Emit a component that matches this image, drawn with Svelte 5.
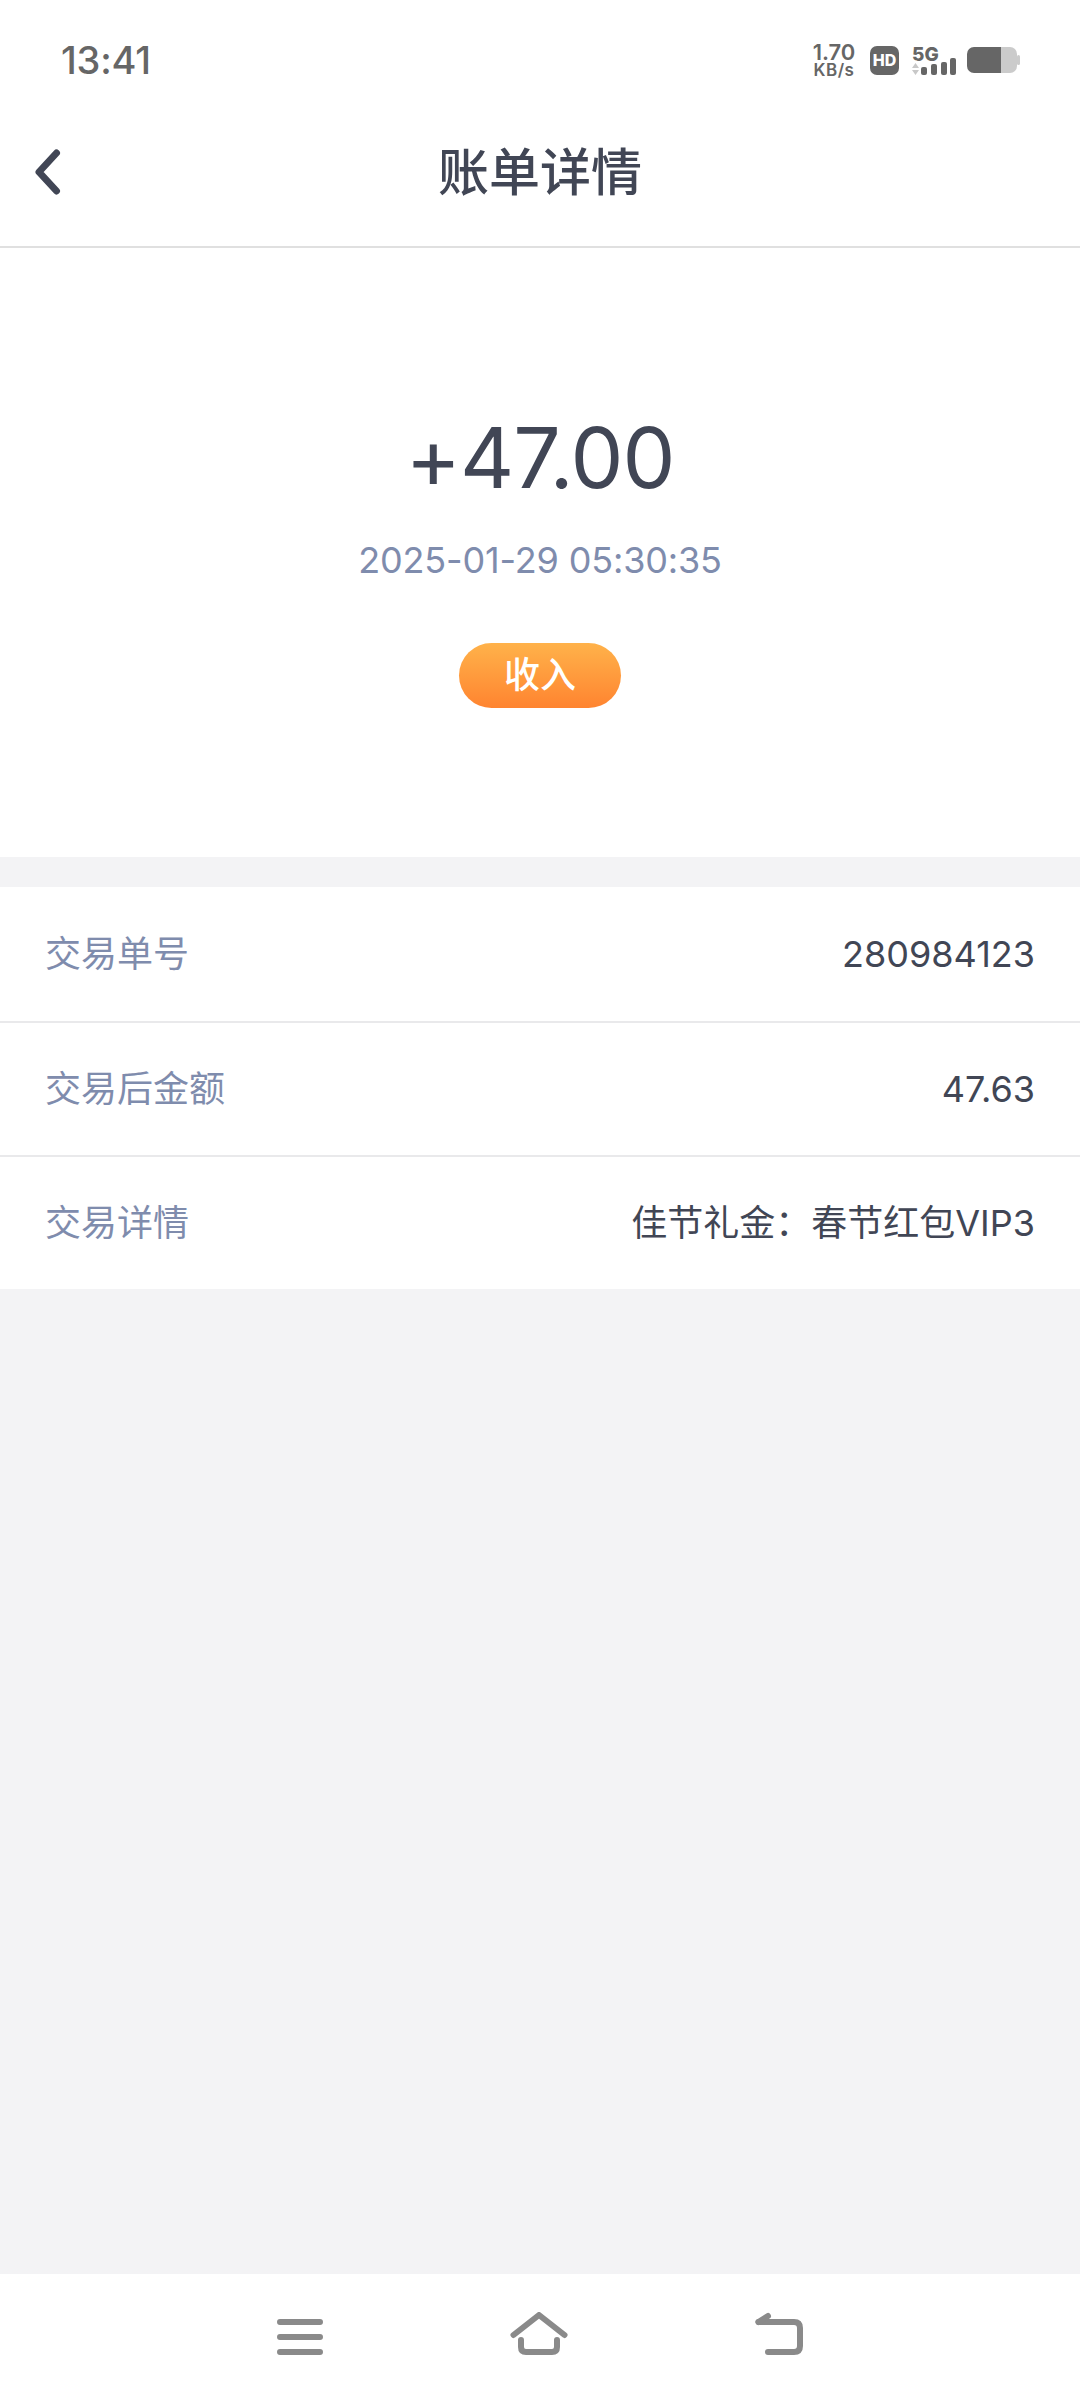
<script lang="ts">
  const rows = [
    { label: '交易单号', value: '280984123' },
    { label: '交易后金额', value: '47.63' },
    { label: '交易详情', value: '佳节礼金：春节红包VIP3' }
  ];
</script>

<div class="page">
  <div class="status-bar">
    <span class="time">13:41</span>
    <div class="status-icons">
      <div class="speed">
        <span>1.70</span>
        <span class="unit">KB/s</span>
      </div>
      <span class="hd">HD</span>
      <div class="signal">
        <span class="five-g">5G</span>
        <svg width="44" height="17" viewBox="0 0 44 17">
          <path d="M0 10 L3.5 5 L7 10 Z M0 12 L7 12 L3.5 17 Z" fill="#c8c8c8" />
          <rect x="9" y="9" width="6" height="8" rx="2" fill="#666" />
          <rect x="19" y="6" width="6" height="11" rx="2" fill="#666" />
          <rect x="29" y="4" width="6" height="13" rx="2" fill="#666" />
          <rect x="38" y="0" width="6" height="17" rx="2" fill="#666" />
        </svg>
      </div>
      <svg class="battery" width="53" height="26" viewBox="0 0 53 26">
        <path d="M34 0 H43 A7 7 0 0 1 50 7 V19 A7 7 0 0 1 43 26 H34 Z" fill="#cbcbcb" />
        <path d="M7 0 H34 V26 H7 A7 7 0 0 1 0 19 V7 A7 7 0 0 1 7 0 Z" fill="#666" />
        <rect x="50" y="8" width="3" height="10" rx="1.5" fill="#cbcbcb" />
      </svg>
    </div>
  </div>

  <header class="nav">
    <button class="back" aria-label="返回">
      <svg width="26" height="46" viewBox="0 0 26 46">
        <path d="M21.5 4 L4 23 L21.5 42" fill="none" stroke="#414655" stroke-width="7" stroke-linecap="round" stroke-linejoin="round" />
      </svg>
    </button>
    <h1>账单详情</h1>
  </header>

  <section class="hero">
    <div class="amount">+47.00</div>
    <div class="date">2025-01-29 05:30:35</div>
    <div class="tag">收入</div>
  </section>

  <section class="list">
    {#each rows as row}
      <div class="row">
        <span class="label">{row.label}</span>
        <span class="value">{row.value}</span>
      </div>
    {/each}
  </section>

  <div class="spacer"></div>

  <nav class="sys-nav">
    <svg width="46" height="43" viewBox="0 0 46 43">
      <path d="M3 10 H43 M3 25 H43 M3 40 H43" stroke="#8a8a8a" stroke-width="6" stroke-linecap="round" />
    </svg>
    <svg width="58" height="43" viewBox="0 0 58 43">
      <path d="M3.5 23 L29 3 L54.5 23" fill="none" stroke="#8a8a8a" stroke-width="6" stroke-linecap="round" stroke-linejoin="round" />
      <path d="M11 28 V35 Q11 40 16 40 H42 Q47 40 47 35 V28" fill="none" stroke="#8a8a8a" stroke-width="6" stroke-linecap="round" />
    </svg>
    <svg width="48" height="43" viewBox="0 0 48 43">
      <path d="M3.5 10 H39 Q45 10 45 16 V34 Q45 40 39 40 H13" fill="none" stroke="#8a8a8a" stroke-width="6" stroke-linecap="round" />
      <path d="M3.5 10 L13 4" fill="none" stroke="#8a8a8a" stroke-width="6" stroke-linecap="round" />
    </svg>
  </nav>
</div>

<style>
  :global(body) {
    margin: 0;
    background: #f3f3f5;
  }

  .page {
    width: 1080px;
    height: 2400px;
    display: flex;
    flex-direction: column;
    background: #f3f3f5;
    font-family: Inter, "Noto Sans CJK SC", sans-serif;
  }

  .status-bar {
    height: 98px;
    flex-shrink: 0;
    display: flex;
    align-items: center;
    justify-content: space-between;
    box-sizing: border-box;
    padding: 22px 60px 0 61px;
    background: #fff;
  }

  .time {
    font-size: 38px;
    font-weight: 500;
    letter-spacing: -0.2px;
    color: #666;
  }

  .status-icons {
    display: flex;
    align-items: center;
  }

  .speed {
    display: flex;
    flex-direction: column;
    align-items: center;
    width: 44px;
    margin-right: 14px;
    font-size: 22px;
    font-weight: 600;
    line-height: 20px;
    color: #666;
  }

  .speed .unit {
    font-size: 17px;
    letter-spacing: 0.5px;
    line-height: 17px;
  }

  .hd {
    width: 29px;
    height: 29px;
    border-radius: 7px;
    background: #666;
    color: #fff;
    font-size: 16px;
    font-weight: 800;
    line-height: 29px;
    text-align: center;
    margin-right: 13px;
  }

  .signal {
    position: relative;
    width: 44px;
    height: 29px;
    display: flex;
    align-items: flex-end;
    margin-right: 11px;
  }

  .five-g {
    position: absolute;
    top: -3px;
    left: 0;
    font-size: 19px;
    font-weight: 800;
    color: #666;
  }

  .nav {
    height: 150px;
    flex-shrink: 0;
    display: flex;
    align-items: center;
    justify-content: center;
    position: relative;
    box-sizing: border-box;
    padding-bottom: 6px;
    background: #fff;
    border-bottom: 2px solid #e0e0e0;
  }

  .back {
    position: absolute;
    left: 35px;
    top: 51px;
    padding: 0;
    border: 0;
    background: none;
    display: flex;
  }

  h1 {
    margin: 0;
    font-size: 51px;
    font-weight: 500;
    color: #414655;
  }

  .hero {
    height: 609px;
    flex-shrink: 0;
    display: flex;
    flex-direction: column;
    align-items: center;
    box-sizing: border-box;
    padding-top: 160px;
    background: #fff;
  }

  .amount {
    font-size: 84px;
    line-height: 100px;
    letter-spacing: -1px;
    color: #414655;
  }

  .date {
    margin-top: 29px;
    font-size: 36px;
    line-height: 46px;
    letter-spacing: -0.15px;
    color: #7f8cad;
  }

  .tag {
    margin-top: 60px;
    width: 162px;
    height: 65px;
    border-radius: 33px;
    background: linear-gradient(180deg, #ffb24a, #ff8430);
    color: #fff;
    font-size: 36px;
    font-weight: 500;
    line-height: 65px;
    text-align: center;
  }

  .list {
    margin-top: 30px;
    background: #fff;
  }

  .row {
    height: 134px;
    display: flex;
    align-items: center;
    justify-content: space-between;
    box-sizing: border-box;
    padding: 0 45px;
    font-size: 36px;
    line-height: 44px;
  }

  .row + .row {
    border-top: 2px solid #e9e9eb;
  }

  .label {
    color: #7f8cad;
  }

  .value {
    color: #414655;
  }

  .spacer {
    flex: 1;
  }

  .sys-nav {
    height: 126px;
    flex-shrink: 0;
    display: flex;
    align-items: flex-start;
    justify-content: center;
    gap: 187px;
    box-sizing: border-box;
    padding-top: 38px;
    background: #fff;
  }
</style>
